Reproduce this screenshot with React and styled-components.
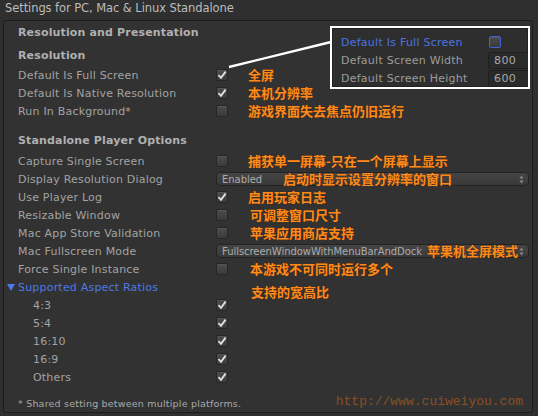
import React from "react";
import styled, { createGlobalStyle } from "styled-components";

const Global = createGlobalStyle`
  html, body { margin: 0; padding: 0; background: #2f2f2f; }
  * { box-sizing: border-box; }
`;

const Window = styled.div`
  position: relative;
  width: 538px;
  height: 416px;
  display: flex;
  flex-direction: column;
  background: #2f2f2f;
  overflow: hidden;
  font-family: "DejaVu Sans", "Noto Sans CJK SC", sans-serif;
`;

const Title = styled.div`
  height: 20px;
  padding: 1px 0 0 5px;
  line-height: 15px;
  font-size: 11.5px;
  color: #bcbcbc;
  letter-spacing: -0.08px;
`;

const Panel = styled.div`
  flex: 1;
  margin: 0 5px 3px 3px;
  border: 1px solid #1c1c1c;
  border-radius: 3px;
  background: #323232;
  padding: 2px 0 0 14px;
  display: flex;
  flex-direction: column;
`;

const Heading = styled.div`
  height: 18px;
  display: flex;
  align-items: center;
  font-weight: bold;
  font-size: 11px;
  color: #b0b0b0;
  letter-spacing: 0.15px;
  margin-top: ${(p) => p.$mt || 0}px;
`;

const Rows = styled.div`
  display: flex;
  flex-direction: column;
  margin-top: ${(p) => p.$mt || 0}px;
`;

const Row = styled.div`
  height: 18px;
  display: flex;
  align-items: center;
`;

const Label = styled.div`
  width: 198px;
  flex-shrink: 0;
  padding-left: ${(p) => (p.$indent ? 15 : 0)}px;
  font-size: 11px;
  color: #a2a2a2;
  letter-spacing: 0.2px;
  white-space: nowrap;
`;

const FoldLabel = styled.div`
  margin-left: -11px;
  width: 209px;
  flex-shrink: 0;
  display: flex;
  align-items: center;
  gap: 3px;
  font-size: 11px;
  color: #4d79e6;
  letter-spacing: 0.2px;
  white-space: nowrap;
`;

const Box = styled.div`
  width: 12px;
  height: 12px;
  flex-shrink: 0;
  border-radius: 2px;
  border: 1px solid ${(p) => (p.$focus ? "#3f66d6" : "#262626")};
  background: linear-gradient(#4c4c4c, #3b3b3b);
  box-shadow: inset 0 1px 0 rgba(255, 255, 255, 0.06);
  display: flex;
  align-items: center;
  justify-content: center;
`;

const Note = styled.span`
  margin-left: ${(p) => p.$ml ?? 20}px;
  margin-top: ${(p) => p.$mt || 0}px;
  font-family: "Noto Sans CJK SC", sans-serif;
  font-weight: bold;
  font-size: 13px;
  line-height: 16px;
  color: #ff8a1c;
  text-shadow: 0 0 1px #5a2a00;
  white-space: nowrap;
`;

const Dropdown = styled.div`
  width: 313px;
  height: 14px;
  flex-shrink: 0;
  border-radius: 4px;
  border: 1px solid #232323;
  background: linear-gradient(#454545, #393939);
  display: flex;
  align-items: center;
  padding: 0 4px 0 5px;
`;

const DropValue = styled.span`
  font-size: 10px;
  color: #acacac;
  letter-spacing: -0.05px;
  white-space: nowrap;
`;

const Arrows = styled.svg`
  margin-left: auto;
  flex-shrink: 0;
`;

const Footer = styled.div`
  margin-top: 8px;
  height: 18px;
  display: flex;
  align-items: center;
  padding-right: 9px;
`;

const FootText = styled.span`
  font-size: 9.5px;
  color: #a8a8a8;
  letter-spacing: 0.2px;
`;

const Watermark = styled.span`
  margin-left: auto;
  margin-bottom: 4px;
  font-family: "Liberation Mono", monospace;
  font-size: 13px;
  color: #8c4f25;
`;

const Callout = styled.div`
  position: absolute;
  left: 330px;
  top: 26px;
  width: 200px;
  height: 63px;
  border: 2px solid #fff;
  background: #2e2e2e;
  box-shadow: inset 0 0 0 1px #222;
  padding: 5px 0 0 9px;
  display: flex;
  flex-direction: column;
  overflow: hidden;
`;

const CalloutLabel = styled.div`
  width: 148px;
  flex-shrink: 0;
  font-size: 11px;
  color: ${(p) => (p.$active ? "#4a74e0" : "#9c9c9c")};
  letter-spacing: 0.25px;
  white-space: nowrap;
`;

const Field = styled.div`
  margin-left: -1px;
  width: 44px;
  height: 17px;
  flex-shrink: 0;
  border: 1px solid #1f1f1f;
  border-radius: 2px;
  background: #2a2a2a;
  padding-left: 5px;
  font-size: 11px;
  line-height: 15px;
  color: #a8a8a8;
  letter-spacing: 0.4px;
`;

const Pointer = styled.svg`
  position: absolute;
  left: 0;
  top: 0;
  pointer-events: none;
`;

const Check = ({ on, focus }) => (
  <Box $focus={focus}>
    {on && (
      <svg width="10" height="10" viewBox="0 0 10 10">
        <path d="M1.5 5.2 L4 7.8 L8.6 1.6" fill="none" stroke="#e2e2e2" strokeWidth="1.8" />
      </svg>
    )}
  </Box>
);

const Select = ({ value, note, noteMl }) => (
  <Dropdown>
    <DropValue>{value}</DropValue>
    {note && <Note $ml={noteMl}>{note}</Note>}
    <Arrows width="5" height="9" viewBox="0 0 5 9">
      <path d="M2.5 0.5 L4.5 3.5 L0.5 3.5 Z M2.5 8.5 L4.5 5.5 L0.5 5.5 Z" fill="#8a8a8a" />
    </Arrows>
  </Dropdown>
);

const resolution = [
  { label: "Default Is Full Screen", on: true, note: "全屏" },
  { label: "Default Is Native Resolution", on: true, note: "本机分辨率" },
  { label: "Run In Background*", on: false, note: "游戏界面失去焦点仍旧运行" },
];

const ratios = ["4:3", "5:4", "16:10", "16:9", "Others"];

export default function App() {
  return (
    <>
      <Global />
      <Window>
        <Title>Settings for PC, Mac &amp; Linux Standalone</Title>
        <Panel>
          <Heading>Resolution and Presentation</Heading>
          <Heading $mt={5}>Resolution</Heading>
          <Rows $mt={2}>
            {resolution.map((r) => (
              <Row key={r.label}>
                <Label>{r.label}</Label>
                <Check on={r.on} />
                <Note>{r.note}</Note>
              </Row>
            ))}
          </Rows>
          <Heading $mt={11}>Standalone Player Options</Heading>
          <Rows $mt={3}>
            <Row>
              <Label>Capture Single Screen</Label>
              <Check />
              <Note>捕获单一屏幕-只在一个屏幕上显示</Note>
            </Row>
            <Row>
              <Label>Display Resolution Dialog</Label>
              <Select value="Enabled" note="启动时显示设置分辨率的窗口" noteMl={21} />
            </Row>
            <Row>
              <Label>Use Player Log</Label>
              <Check on />
              <Note>启用玩家日志</Note>
            </Row>
            <Row>
              <Label>Resizable Window</Label>
              <Check />
              <Note $ml={22}>可调整窗口尺寸</Note>
            </Row>
            <Row>
              <Label>Mac App Store Validation</Label>
              <Check />
              <Note $ml={22}>苹果应用商店支持</Note>
            </Row>
            <Row>
              <Label>Mac Fullscreen Mode</Label>
              <Select value="FullscreenWindowWithMenuBarAndDock" note="苹果机全屏模式" noteMl={5} />
            </Row>
            <Row>
              <Label>Force Single Instance</Label>
              <Check />
              <Note $ml={22}>本游戏不可同时运行多个</Note>
            </Row>
            <Row>
              <FoldLabel>
                <svg width="8" height="7" viewBox="0 0 8 7">
                  <path d="M0 0 L8 0 L4 7 Z" fill="#4d79e6" />
                </svg>
                Supported Aspect Ratios
              </FoldLabel>
              <Note $ml={35} $mt={10}>支持的宽高比</Note>
            </Row>
            {ratios.map((r) => (
              <Row key={r}>
                <Label $indent>{r}</Label>
                <Check on />
              </Row>
            ))}
          </Rows>
          <Footer>
            <FootText>* Shared setting between multiple platforms.</FootText>
            <Watermark>http://www.cuiweiyou.com</Watermark>
          </Footer>
        </Panel>

        <Pointer width="538" height="416" viewBox="0 0 538 416">
          <path d="M229 67 L331 42" stroke="#fff" strokeWidth="2.4" />
        </Pointer>

        <Callout>
          <Row>
            <CalloutLabel $active>Default Is Full Screen</CalloutLabel>
            <Check focus />
          </Row>
          <Row>
            <CalloutLabel>Default Screen Width</CalloutLabel>
            <Field>800</Field>
          </Row>
          <Row>
            <CalloutLabel>Default Screen Height</CalloutLabel>
            <Field>600</Field>
          </Row>
        </Callout>
      </Window>
    </>
  );
}
